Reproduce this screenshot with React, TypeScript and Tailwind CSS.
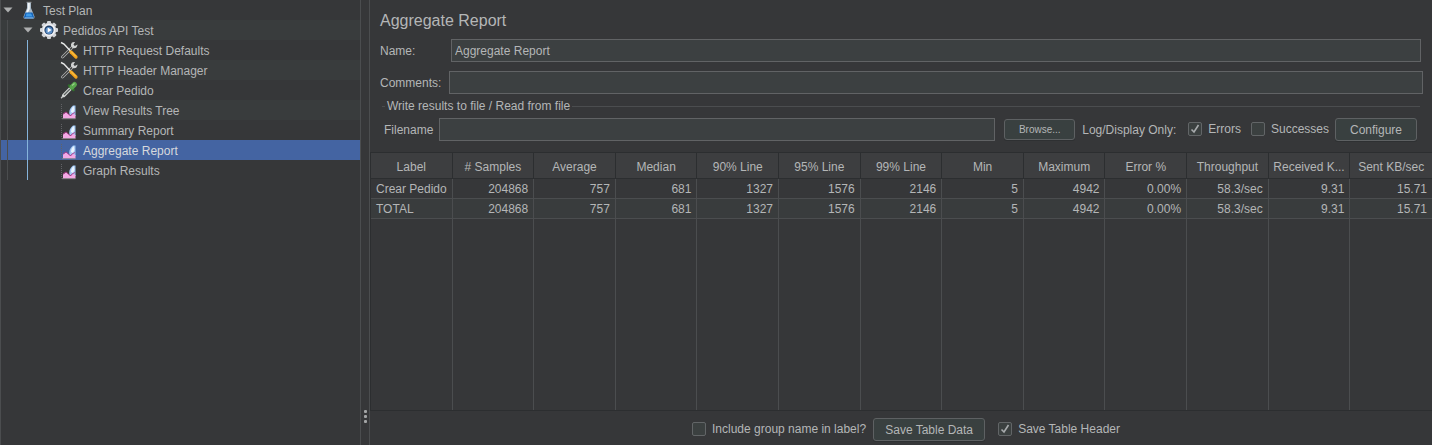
import React from 'react';

type IconName = 'flask' | 'gear' | 'tools' | 'dropper' | 'chart';

interface Node {
  label: string;
  icon: IconName;
  depth: number;
  open?: boolean;
  selected?: boolean;
}

const nodes: Node[] = [
  { label: 'Test Plan', icon: 'flask', depth: 0, open: true },
  { label: 'Pedidos API Test', icon: 'gear', depth: 1, open: true },
  { label: 'HTTP Request Defaults', icon: 'tools', depth: 2 },
  { label: 'HTTP Header Manager', icon: 'tools', depth: 2 },
  { label: 'Crear Pedido', icon: 'dropper', depth: 2 },
  { label: 'View Results Tree', icon: 'chart', depth: 2 },
  { label: 'Summary Report', icon: 'chart', depth: 2 },
  { label: 'Aggregate Report', icon: 'chart', depth: 2, selected: true },
  { label: 'Graph Results', icon: 'chart', depth: 2 },
];

const columns = [
  'Label', '# Samples', 'Average', 'Median', '90% Line', '95% Line', '99% Line',
  'Min', 'Maximum', 'Error %', 'Throughput', 'Received K...', 'Sent KB/sec',
];

const rows = [
  ['Crear Pedido', '204868', '757', '681', '1327', '1576', '2146', '5', '4942', '0.00%', '58.3/sec', '9.31', '15.71'],
  ['TOTAL', '204868', '757', '681', '1327', '1576', '2146', '5', '4942', '0.00%', '58.3/sec', '9.31', '15.71'],
];

function TreeIcon({ name }: { name: IconName }) {
  const box = 'size-5 shrink-0';
  switch (name) {
    case 'flask':
      return (
        <svg className={box} viewBox="0 0 20 20" aria-hidden="true">
          <path d="M8 2h4v6l3.500 8.500q.4 2.300-1.500 2.300H6q-1.900 0-1.500-2.300L8 8z" fill="#a9b9c8" />
          <path d="M8.800 3h2v6l-2.500 5H6.500L8.800 8z" fill="#f1f5f8" />
          <path d="M6.500 12.500h7l1.400 4.200q.2 1.700-1.500 1.700H6.600q-1.700 0-1.500-1.700z" fill="#1562b8" />
          <path d="M7.500 13.500h4.500l1.500 3H6.800z" fill="#3f9bea" />
          <path d="M6 17.800h8" stroke="#9cc8ee" strokeWidth="0.8" />
          <path d="M7.500 2.300h5" stroke="#8c8f92" strokeWidth="1" />
        </svg>
      );
    case 'gear':
      return (
        <svg className={box} viewBox="0 0 20 20" aria-hidden="true">
          <g fill="#d3d6da">
            <rect x="8" y="1" width="4" height="18" rx="1" />
            <rect x="8" y="1" width="4" height="18" rx="1" transform="rotate(45 10 10)" />
            <rect x="8" y="1" width="4" height="18" rx="1" transform="rotate(90 10 10)" />
            <rect x="8" y="1" width="4" height="18" rx="1" transform="rotate(135 10 10)" />
            <circle cx="10" cy="10" r="7.300" />
          </g>
          <circle cx="10" cy="10" r="6.200" fill="#f1f2f4" />
          <circle cx="10" cy="10" r="4.600" fill="#1f3f68" />
          <circle cx="10" cy="10.500" r="3.500" fill="#5c8fc6" />
          <path d="M8.700 7.500v5l3.800-2.500z" fill="#fff" />
        </svg>
      );
    case 'tools':
      return (
        <svg className={box} viewBox="0 0 20 20" aria-hidden="true">
          <path d="M3.500 17L13.500 7" stroke="#b4b6b6" strokeWidth="2.800" strokeLinecap="round" />
          <path d="M3.500 17L13 7.500" stroke="#3a3b3b" strokeWidth="1.200" strokeLinecap="round" />
          <path d="M16 2q-3.500-.5-4 2.300-.3 3.500 2.700 4 3 .2 3.600-2.600l.2-1.200-2.700 1.500-1.300-1.500z" fill="#d0d2d2" />
          <path d="M2 2.500L5 4l6.500 7" stroke="#e8e9e9" strokeWidth="1.500" fill="none" />
          <path d="M12 12L17 17" stroke="#f0a01c" strokeWidth="3.200" strokeLinecap="round" />
          <path d="M12 11.500L16.800 16.300" stroke="#ffd15a" strokeWidth="1" />
        </svg>
      );
    case 'dropper':
      return (
        <svg className={box} viewBox="0 0 20 20" aria-hidden="true">
          <path d="M2.500 17.700L5 15" stroke="#c4c6c5" strokeWidth="1.500" strokeLinecap="round" />
          <path d="M4.700 15.500L12 8" stroke="#d4d6d5" strokeWidth="3.400" strokeLinecap="round" />
          <path d="M5 15L11 9" stroke="#5b605e" strokeWidth="1.200" />
          <path d="M10 5.500L14.500 10" stroke="#2f6b2b" strokeWidth="2.500" strokeLinecap="round" />
          <path d="M13 7L15.500 4.500" stroke="#58a54c" strokeWidth="5" strokeLinecap="round" />
          <path d="M13 5.500L15.500 3.500" stroke="#9bd38b" strokeWidth="1.300" />
        </svg>
      );
    default:
      return (
        <svg className={box} viewBox="0 0 20 20" aria-hidden="true">
          <path d="M2.500 4v14.500" stroke="#626366" strokeWidth="1" strokeDasharray="1 1" />
          <path d="M10.500 15q-1-5 2-8l1.500-1.500h2.500V16z" fill="#9fc7f3" />
          <path d="M12 12q0-4 3-6l.5 4-1.500 3z" fill="#eaf4ff" />
          <path d="M4 18.500v-4l3-2 3 2 1.500 1.500 2-2 3 1v3.500z" fill="#f3a9e5" />
          <path d="M4 14l3-2 2.500 2M9.500 14l2 2 1.500-2 3-1.500" stroke="#b23a8c" strokeWidth="0.900" fill="none" />
          <path d="M3 18.700h13.500" stroke="#8a8a8c" strokeWidth="0.800" />
        </svg>
      );
  }
}

function TreeRow({ node, index }: { node: Node; index: number }) {
  const bg = node.selected ? 'bg-[#4464a2] text-[#d6d9dd]' : index % 2 ? 'bg-[#393c3d]' : '';
  return (
    <li role="treeitem" aria-selected={!!node.selected} className={`flex h-5 items-center ${bg}`}>
      {node.depth > 0 && <span className="ml-[6px] h-5 w-5 shrink-0 border-l border-[#4b4d4f]" />}
      {node.depth > 1 && <span className="h-5 w-5 shrink-0 border-l border-[#86b4dc]" />}
      {node.open && (
        <span className={`flex w-[14px] shrink-0 justify-center ${node.depth ? '-ml-[6px]' : ''}`}>
          <svg className="h-[6px] w-[10px]" viewBox="0 0 10 6" aria-hidden="true">
            <path d="M0.500 0.500h9L5 5.500z" fill="#adafb0" />
          </svg>
        </span>
      )}
      <span className={`flex items-center ${node.depth > 1 ? 'ml-3 gap-1' : 'ml-1 gap-1'}`}>
        <TreeIcon name={node.icon} />
        <span className="pt-px">{node.label}</span>
      </span>
    </li>
  );
}

function Check({ label, checked }: { label: string; checked?: boolean }) {
  return (
    <label className="flex shrink-0 items-center gap-[6px] pb-[2px]">
      <span className="grid">
        <input
          type="checkbox"
          defaultChecked={checked}
          className="peer col-start-1 row-start-1 size-[14px] appearance-none rounded-[2px] border border-[#626567] bg-[#3b4040]"
        />
        <svg
          className="pointer-events-none invisible col-start-1 row-start-1 size-[14px] peer-checked:visible"
          viewBox="0 0 14 14"
          aria-hidden="true"
        >
          <path d="M3.500 7.500L6 10l4.500-7" fill="none" stroke="#a8abad" strokeWidth="1.600" />
        </svg>
      </span>
      {label}
    </label>
  );
}

const field = 'h-[23px] min-w-0 flex-1 border border-[#616365] bg-[#3c4041] px-[3px] outline-none';
const button = 'shrink-0 rounded-[3px] border border-[#5e6163] bg-[#394040] shadow-[0_1px_0_#2e3032]';

export default function App() {
  return (
    <div className="flex min-h-screen bg-[#363739] font-['Liberation_Sans',Arial,sans-serif] text-[12px] leading-5 text-[#b4b6b7]">
      <nav className="w-[361px] shrink-0 border-x border-[#4b4d4f]">
        <ul role="tree" aria-label="Test plan">
          {nodes.map((n, i) => <TreeRow key={n.label} node={n} index={i} />)}
        </ul>
      </nav>

      <div className="flex w-2 shrink-0 flex-col items-center justify-end gap-[2px] pb-[22px]">
        <i className="size-[3px] rounded-[1px] bg-[#a3a5a6]" />
        <i className="size-[3px] rounded-[1px] bg-[#a3a5a6]" />
        <i className="size-[3px] rounded-[1px] bg-[#a3a5a6]" />
      </div>

      <main className="flex min-w-0 flex-1 flex-col border-l border-[#4b4d4f]">
        <div className="pt-[9px] pr-[9px] pl-[10px]">
          <h1 className="text-[16px] leading-6">Aggregate Report</h1>
          <div className="mt-[6px] flex items-center pr-[2px]">
            <label htmlFor="name" className="w-[71px]">Name:</label>
            <input id="name" className={field} defaultValue="Aggregate Report" />
          </div>
          <div className="mt-[9px] flex items-center">
            <label htmlFor="comments" className="w-[69px]">Comments:</label>
            <input id="comments" className={field} />
          </div>
        </div>

        <fieldset className="mx-[10px] min-w-0">
          <legend className="flex w-full items-center gap-[2px] pr-[2px] pl-[2px] leading-[24px]">
            <span className="h-px w-[3px] bg-[#4b4d4f]" />
            Write results to file / Read from file
            <span className="h-px flex-1 bg-[#4b4d4f]" />
          </legend>
          <div className="flex items-center pr-[5px] pl-1">
            <label htmlFor="filename" className="w-[55px] shrink-0">Filename</label>
            <input id="filename" className={field} />
            <button className={`${button} ml-[9px] h-[21px] w-[71px] text-[10px]`}>Browse...</button>
            <span className="mr-3 ml-[7px] shrink-0">Log/Display Only:</span>
            <Check label="Errors" checked />
            <span className="w-[10px] shrink-0" />
            <Check label="Successes" />
            <button className={`${button} ml-[6px] h-[23px] w-[82px]`}>Configure</button>
          </div>
        </fieldset>

        <div className="mt-[11px] flex flex-1 border-y border-l border-[#2c2e30]">
          <table className="w-full table-fixed border-separate border-spacing-0">
            <thead>
              <tr className="h-[26px] bg-[#3d3e40]">
                {columns.map((c) => (
                  <th key={c} className="border-r border-b border-[#2c2e30] px-px pt-[2px] font-normal whitespace-nowrap last:border-r-0">{c}</th>
                ))}
              </tr>
            </thead>
            <tbody>
              {rows.map((r, i) => (
                <tr key={r[0]} className={`h-5 ${i % 2 ? 'bg-[#393c3d]' : ''}`}>
                  {r.map((v, j) => (
                    <td
                      key={columns[j]}
                      className="border-r border-b border-[#4b4d4f] px-[5px] pt-px text-right leading-[18px] whitespace-nowrap first:pr-0 first:text-left last:border-r-0"
                    >
                      {v}
                    </td>
                  ))}
                </tr>
              ))}
              <tr className="h-full">
                {columns.map((c) => <td key={c} className="border-r border-[#4b4d4f] last:border-r-0" />)}
              </tr>
            </tbody>
          </table>
        </div>

        <footer className="flex h-[34px] items-center justify-center pt-[3px] pl-[10px]">
          <Check label="Include group name in label?" />
          <button className={`${button} mr-[13px] ml-[7px] h-[23px] w-[112px]`}>Save Table Data</button>
          <Check label="Save Table Header" checked />
        </footer>
      </main>
    </div>
  );
}
